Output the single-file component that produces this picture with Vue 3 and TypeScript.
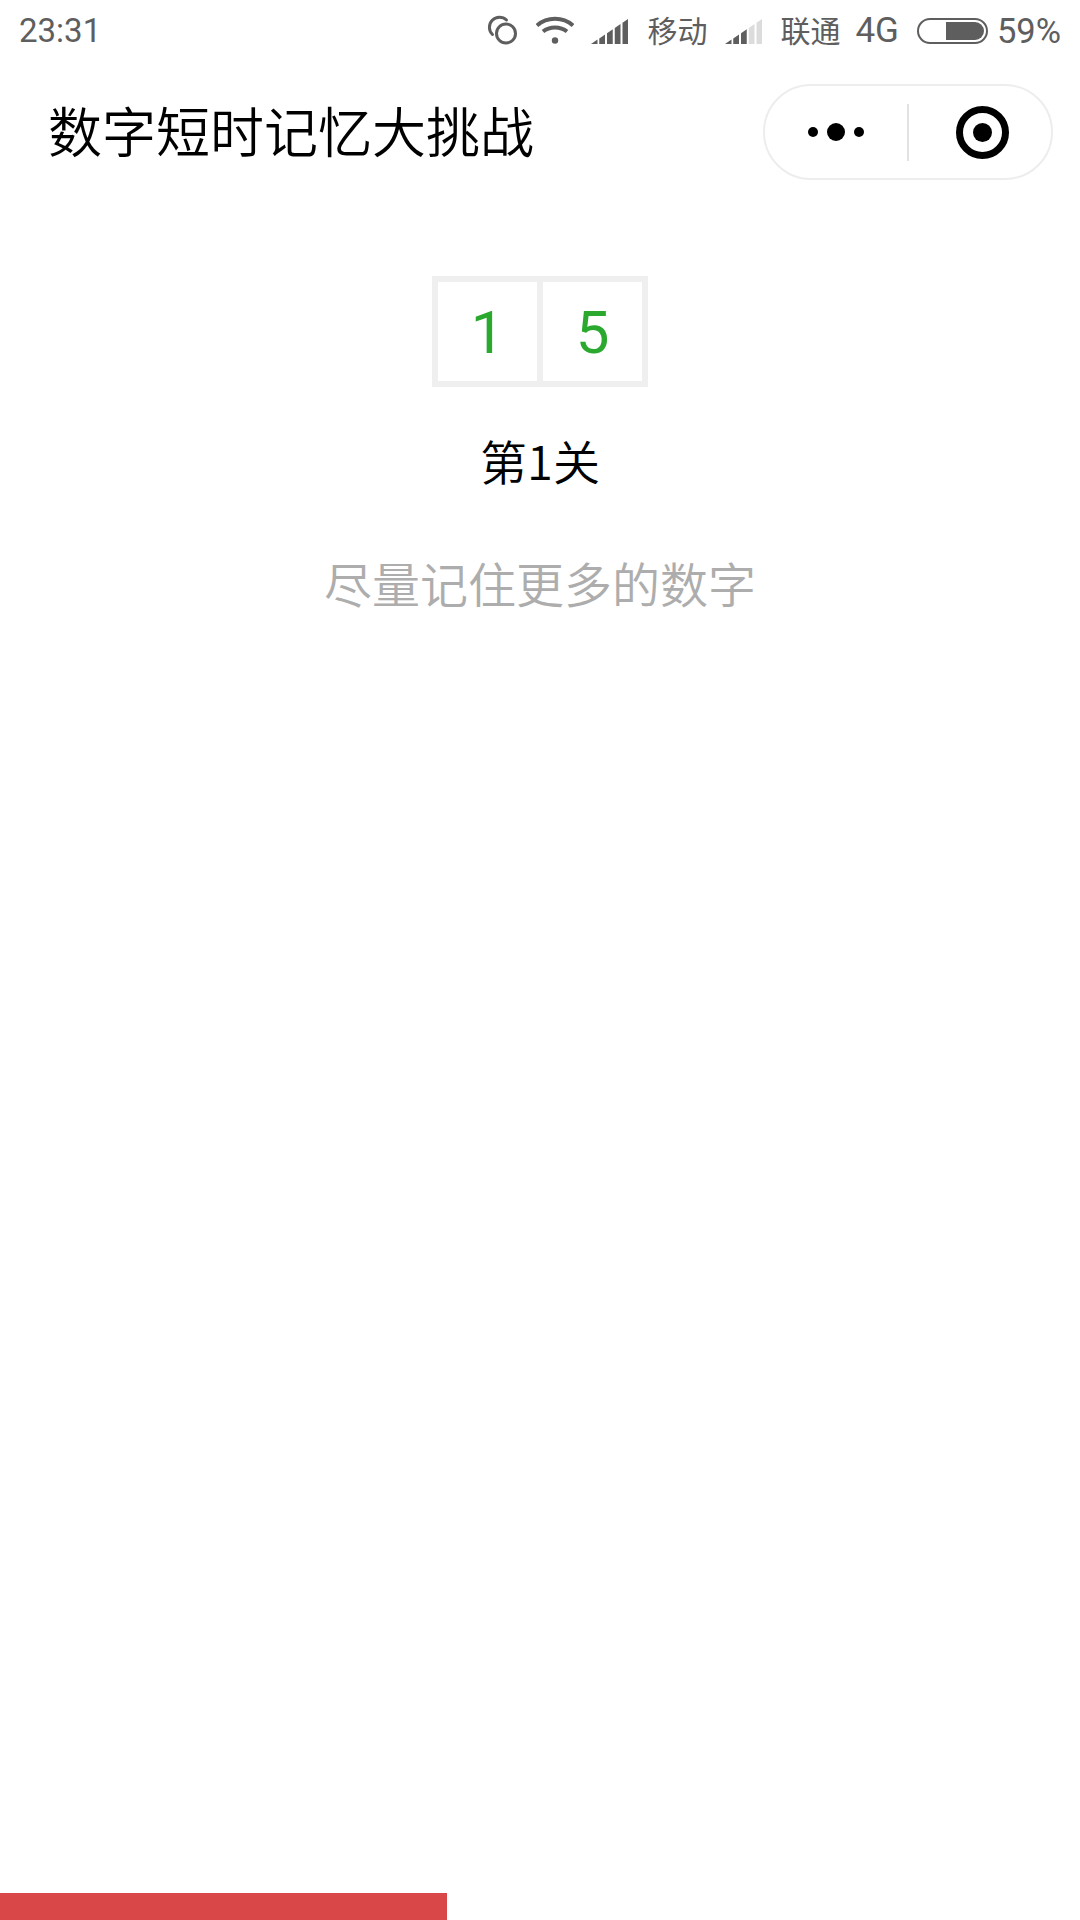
<script setup lang="ts">
const cells: number[] = [1, 5]

// Signal icon: a 37x25 wedge cut into five stair-step bars.
const topAt = (x: number): number => 25 * (1 - x / 37)
const barPoints = (i: number): string => {
  const x0 = i === 0 ? 0 : i * 7.75 + 0.5
  const x1 = i === 0 ? 6.5 : x0 + 5.75
  return i === 0
    ? `${x0},25 ${x1},${topAt(x1)} ${x1},25`
    : `${x0},${topAt(x0)} ${x1},${topAt(x1)} ${x1},25 ${x0},25`
}
const bars: number[] = [0, 1, 2, 3, 4]
</script>

<template>
  <div class="page">
    <div class="status">
      <span class="time">23:31</span>
      <div class="status-right">
        <svg class="ic-link" viewBox="0 0 30 30" width="30" height="30">
          <path d="M5.5 19.5A9 9 0 1 1 19.5 5" fill="none" stroke="#5e5e5e" stroke-width="3" stroke-linecap="round" />
          <circle cx="19" cy="18.500" r="9.500" fill="none" stroke="#5e5e5e" stroke-width="3" />
        </svg>
        <svg class="ic-wifi" viewBox="0 0 38 28" width="38" height="28">
          <path d="M1 9.500C11 .5 27 .5 37 9.500" fill="none" stroke="#5e5e5e" stroke-width="4" />
          <path d="M7 15.500C13.500 10 24.500 10 31 15.500" fill="none" stroke="#5e5e5e" stroke-width="4" />
          <circle cx="19" cy="24.500" r="3.200" fill="#5e5e5e" />
        </svg>
        <svg class="ic-sig sig-one" viewBox="0 0 37 25" width="37" height="25">
          <polygon v-for="b in bars" :key="b" :points="barPoints(b)" fill="#5e5e5e" />
        </svg>
        <span class="cn carrier1">移动</span>
        <svg class="ic-sig sig-two" viewBox="0 0 37 25" width="37" height="25">
          <polygon v-for="b in bars" :key="b" :points="barPoints(b)" :fill="b > 2 ? '#dcdcdc' : '#5e5e5e'" />
        </svg>
        <span class="cn carrier2">联通</span>
        <span class="net">4G</span>
        <div class="battery"><div class="battery-fill"></div></div>
        <span class="pct">59%</span>
      </div>
    </div>

    <div class="nav">
      <h1 class="title">数字短时记忆大挑战</h1>
      <div class="capsule">
        <div class="cap-side">
          <i class="dot"></i><i class="dot big"></i><i class="dot"></i>
        </div>
        <div class="cap-line"></div>
        <div class="cap-side">
          <div class="target"><div class="target-core"></div></div>
        </div>
      </div>
    </div>

    <main class="main">
      <div class="digits">
        <div v-for="c in cells" :key="c" class="digit">{{ c }}</div>
      </div>
      <div class="level">第1关</div>
      <div class="hint">尽量记住更多的数字</div>
    </main>

    <div class="progress"><div class="progress-fill"></div></div>
  </div>
</template>

<style scoped>
.page {
  width: 1080px;
  height: 1920px;
  display: flex;
  flex-direction: column;
  background: #fff;
  overflow: hidden;
  font-family: "Noto Sans CJK SC", "Noto Sans", sans-serif;
}
.status {
  height: 62px;
  display: flex;
  align-items: center;
  justify-content: space-between;
  padding: 0 19px;
  color: #5e5e5e;
  font-family: Roboto, "Noto Sans CJK SC", sans-serif;
  font-size: 33px;
  line-height: 62px;
}
.status-right {
  display: flex;
  align-items: center;
}
.ic-link { margin-bottom: 2px; }
.ic-wifi { margin-left: 19px; margin-bottom: 2px; }
.sig-one { margin-left: 17px; }
.sig-two { margin-left: 18px; }
.cn {
  font-family: "Noto Sans CJK SC", sans-serif;
  font-size: 30px;
  line-height: 58px;
  margin-bottom: 4px;
  font-weight: 400;
}
.carrier1 { margin-left: 19px; }
.carrier2 { margin-left: 18px; }
.net { margin-left: 15px; font-size: 35px; }
.battery {
  margin-left: 18px;
  width: 71px;
  height: 26px;
  box-sizing: border-box;
  border: 2px solid #5e5e5e;
  border-radius: 13px;
  display: flex;
  justify-content: flex-end;
  padding: 2px;
}
.battery-fill {
  width: 38px;
  background: #5e5e5e;
  border-radius: 0 9px 9px 0;
}
.pct { margin-left: 9px; font-size: 34.5px; }
.nav {
  display: flex;
  align-items: center;
  justify-content: space-between;
  height: 96px;
  margin-top: 22px;
  padding: 0 27px 0 48px;
}
.title {
  margin: 0 0 5px;
  font-size: 54px;
  font-weight: 350;
  color: #000;
  line-height: 1;
}
.capsule {
  width: 290px;
  height: 96px;
  box-sizing: border-box;
  border: 2px solid #ededed;
  border-radius: 48px;
  display: flex;
  align-items: center;
}
.cap-side {
  flex: 1;
  display: flex;
  align-items: center;
  justify-content: center;
  gap: 9px;
}
.cap-line {
  width: 2px;
  height: 57px;
  background: #e2e2e2;
}
.dot {
  width: 10px;
  height: 10px;
  border-radius: 50%;
  background: #000;
}
.dot.big {
  width: 18px;
  height: 18px;
}
.target {
  width: 53px;
  height: 53px;
  margin-left: 4px;
  box-sizing: border-box;
  border: 7px solid #000;
  border-radius: 50%;
  display: flex;
  align-items: center;
  justify-content: center;
}
.target-core {
  width: 19px;
  height: 19px;
  border-radius: 50%;
  background: #000;
}
.main {
  display: flex;
  flex-direction: column;
  align-items: center;
  padding-top: 96px;
}
.digits {
  display: flex;
  gap: 6px;
  padding: 6px;
  background: #efefef;
}
.digit {
  width: 99px;
  height: 99px;
  background: #fff;
  color: #2aa92e;
  font-family: Roboto, sans-serif;
  font-weight: 400;
  font-size: 60px;
  line-height: 101px;
  text-align: center;
}
.level {
  margin-top: 38px;
  font-size: 47px;
  line-height: 70px;
  color: #000;
  font-weight: 350;
}
.hint {
  margin-top: 52px;
  font-size: 48px;
  line-height: 70px;
  color: #adadad;
  font-weight: 350;
}
.progress {
  margin-top: auto;
  height: 27px;
}
.progress-fill {
  width: 447px;
  height: 100%;
  background: #d94748;
}
</style>
